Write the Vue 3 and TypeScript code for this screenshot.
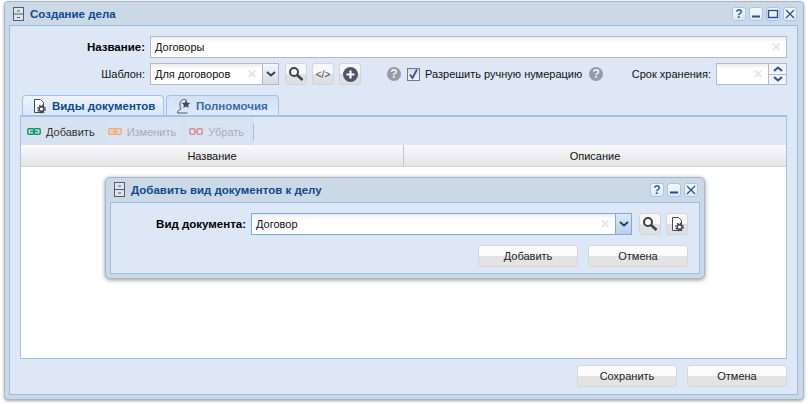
<script setup lang="ts">
const stubs: string[] = []
</script>

<template>
  <div class="page">
    <div class="win">
      <div class="titlebar">
        <svg class="cab" width="14" height="18" viewBox="0 0 14 18"><rect x="2.500" y="2.500" width="10" height="13" fill="#dfe4ea" stroke="#555e6c"/><path d="M2.500 9h10M6 6h3M6 12.500h3" stroke="#555e6c"/></svg>
        <span class="title">Создание дела</span>
        <div class="tools">
          <span class="tool"><b class="q">?</b></span>
          <span class="tool"><svg width="12" height="12" viewBox="0 0 12 12"><path d="M2 8.500h8" stroke="#23508f" stroke-width="2"/></svg></span>
          <span class="tool"><svg width="12" height="12" viewBox="0 0 12 12"><rect x="1.500" y="2.500" width="9" height="7" fill="none" stroke="#23508f" stroke-width="1.400"/></svg></span>
          <span class="tool"><svg width="12" height="12" viewBox="0 0 12 12"><path d="M2 2l8 8M10 2l-8 8" stroke="#23508f" stroke-width="1.200"/></svg></span>
        </div>
      </div>
      <div class="body">
        <div class="row name-row">
          <label class="lbl strong">Название:</label>
          <div class="input grow"><span class="val">Договоры</span><span class="x">✕</span></div>
        </div>
        <div class="row tpl-row">
          <label class="lbl">Шаблон:</label>
          <div class="input combo"><span class="val">Для договоров</span><span class="x">✕</span></div>
          <span class="trigger"><svg width="10" height="6" viewBox="0 0 10 6"><path d="M1 1l4 3.500L9 1" fill="none" stroke="#30445f" stroke-width="2"/></svg></span>
          <button class="ibtn first"><svg width="18" height="18" viewBox="0 0 18 18"><circle cx="7" cy="7" r="4" fill="#fff" stroke="#3a414c" stroke-width="2"/><path d="M10 10l5.500 5" stroke="#3a414c" stroke-width="2.600"/></svg></button>
          <button class="ibtn code">&lt;/&gt;</button>
          <button class="ibtn"><svg width="17" height="17" viewBox="0 0 17 17"><circle cx="8.500" cy="8.500" r="7.500" fill="#4e5567"/><path d="M8.500 4.500v8M4.500 8.500h8" stroke="#fff" stroke-width="2.200"/></svg></button>
          <span class="help h1">?</span>
          <span class="check"><svg width="13" height="13" viewBox="0 0 13 13"><path d="M3 6.500l2.500 3.500L10 1.500" fill="none" stroke="#33569b" stroke-width="1.800"/></svg></span>
          <span class="chk-text">Разрешить ручную нумерацию</span>
          <span class="help h2">?</span>
          <span class="term">Срок хранения:</span>
          <div class="input spin-input"><span class="x">✕</span></div>
          <div class="spin">
            <span><svg width="10" height="6" viewBox="0 0 10 6"><path d="M1 5l4-3.500L9 5" fill="none" stroke="#30508a" stroke-width="2"/></svg></span>
            <span><svg width="10" height="6" viewBox="0 0 10 6"><path d="M1 1l4 3.500L9 1" fill="none" stroke="#30508a" stroke-width="2"/></svg></span>
          </div>
        </div>
        <div class="tabs">
          <div class="tab active">
            <svg width="15" height="16" viewBox="0 0 15 16"><path d="M2.500 1.500h6l3 3v10h-9z" fill="#fff" stroke="#454c59"/><circle cx="9.500" cy="11" r="2.400" fill="none" stroke="#454c59" stroke-width="1.600"/><circle cx="9.500" cy="11" r="3.800" fill="none" stroke="#454c59" stroke-width="1.400" stroke-dasharray="1.500 1.500"/></svg>
            <span>Виды документов</span>
          </div>
          <div class="tab second">
            <svg width="16" height="16" viewBox="0 0 16 16"><path d="M1.500 15c0-3 2-3 3.500-4-1.500-2-1.500-6 0-8 1.500-2 5-2 6 0" fill="none" stroke="#50565f"/><path d="M1.500 15h10" stroke="#50565f"/><path d="M10 2l1.300 2.700 3 .3-2.200 2 .6 3L10 8.500 7.300 10l.6-3-2.200-2 3-.3z" fill="#454c59"/></svg>
            <span>Полномочия</span>
          </div>
        </div>
        <div class="tabbody">
          <div class="toolbar">
            <span class="tb"><svg width="14" height="7" viewBox="0 0 14 7"><rect x="0.800" y="0.800" width="6" height="5.400" rx="1" fill="none" stroke="#0f9a64" stroke-width="1.500"/><rect x="7.200" y="0.800" width="6" height="5.400" rx="1" fill="none" stroke="#0f9a64" stroke-width="1.500"/><path d="M3 3.500h8" stroke="#0f9a64" stroke-width="1.500"/></svg>Добавить</span>
            <span class="tb off edit"><svg width="14" height="7" viewBox="0 0 14 7"><rect x="0.800" y="0.800" width="6" height="5.400" rx="1" fill="none" stroke="#f0ad74" stroke-width="1.500"/><rect x="7.200" y="0.800" width="6" height="5.400" rx="1" fill="none" stroke="#f0ad74" stroke-width="1.500"/><path d="M3 3.500h8" stroke="#f0ad74" stroke-width="1.500"/></svg>Изменить</span>
            <span class="tb off del"><svg width="14" height="7" viewBox="0 0 14 7"><rect x="0.800" y="0.800" width="5" height="5.400" rx="1" fill="none" stroke="#dc8d9a" stroke-width="1.500"/><rect x="8.200" y="0.800" width="5" height="5.400" rx="1" fill="none" stroke="#dc8d9a" stroke-width="1.500"/><path d="M5.800 3.500h2.400" stroke="#dc8d9a" stroke-width="1.500"/></svg>Убрать</span>
            <span class="sep"></span>
          </div>
          <div class="thead">
            <div class="th">Название</div>
            <div class="th">Описание</div>
          </div>
          <div class="grid-body"></div>
        </div>
        <div class="footer">
          <button class="btn">Сохранить</button>
          <button class="btn">Отмена</button>
        </div>
      </div>

      <div class="dialog">
        <div class="titlebar dlg-title">
          <svg class="cab" width="14" height="18" viewBox="0 0 14 18"><rect x="2.500" y="1.500" width="10" height="14" fill="#dfe4ea" stroke="#555e6c"/><path d="M2.500 8.500h10M6 5h3M6 12h3" stroke="#555e6c"/></svg>
          <span class="title">Добавить вид документов к делу</span>
          <div class="tools dlg-tools">
            <span class="tool"><b class="q">?</b></span>
            <span class="tool"><svg width="12" height="12" viewBox="0 0 12 12"><path d="M2 8.500h8" stroke="#23508f" stroke-width="2"/></svg></span>
            <span class="tool"><svg width="12" height="12" viewBox="0 0 12 12"><path d="M2 2l8 8M10 2l-8 8" stroke="#23508f" stroke-width="1.200"/></svg></span>
          </div>
        </div>
        <div class="dlg-body">
          <div class="dlg-row">
            <label class="lbl strong dlg-lbl">Вид документа:</label>
            <div class="input focus"><span class="val">Договор</span><span class="x">✕</span></div>
            <span class="trigger focus-trigger"><svg width="10" height="6" viewBox="0 0 10 6"><path d="M1 1l4 3.500L9 1" fill="none" stroke="#23406f" stroke-width="2"/></svg></span>
            <button class="ibtn first-d"><svg width="18" height="18" viewBox="0 0 18 18"><circle cx="7" cy="7" r="4" fill="#fff" stroke="#3a414c" stroke-width="2"/><path d="M10 10l5.500 5" stroke="#3a414c" stroke-width="2.600"/></svg></button>
            <button class="ibtn"><svg width="15" height="16" viewBox="0 0 15 16"><path d="M2.500 1.500h6l3 3v10h-9z" fill="#fff" stroke="#454c59"/><circle cx="9.500" cy="11" r="2.400" fill="none" stroke="#454c59" stroke-width="1.600"/><circle cx="9.500" cy="11" r="3.800" fill="none" stroke="#454c59" stroke-width="1.400" stroke-dasharray="1.500 1.500"/></svg></button>
          </div>
          <div class="dlg-actions">
            <button class="btn">Добавить</button>
            <button class="btn">Отмена</button>
          </div>
        </div>
      </div>
    </div>
    <i v-for="s in stubs" :key="s"></i>
  </div>
</template>

<style>
html, body { margin: 0; background: #fff; }
</style>

<style scoped>
.page {
  width: 808px;
  height: 404px;
  overflow: hidden;
  padding: 1px 4px 4px 4px;
  box-sizing: border-box;
  font-family: "Liberation Sans", "Noto Sans", sans-serif;
  font-size: 11px;
  color: #111;
}
.win {
  position: relative;
  height: 399px;
  width: 800px;
  box-sizing: border-box;
  border: 1px solid #aab6c8;
  border-radius: 4px;
  background: #cbd8e6;
  box-shadow: 0 1px 3px rgba(80, 90, 110, .55);
  padding: 0 5px 4px 4px;
  display: flex;
  flex-direction: column;
}
.titlebar {
  height: 23px;
  display: flex;
  align-items: center;
  flex: none;
}
.cab { margin-right: 5px; margin-left: 2px; flex: none; }
.title { font-weight: 700; font-size: 11.500px; color: #0f4a90; white-space: nowrap; }
.tools { margin-left: auto; margin-right: 1px; display: flex; gap: 3px; }
.tool {
  width: 14px; height: 14px;
  box-sizing: border-box;
  border: 1px solid #a9c5e8;
  border-radius: 3px;
  background: linear-gradient(#f6faff, #dbe8f8);
  display: flex; align-items: center; justify-content: center;
}
.q { font-size: 12px; line-height: 1; color: #2d62ad; }
.body {
  flex: 1;
  min-height: 0;
  border: 1px solid #99bce8;
  background: #dde7f6;
  display: flex;
  flex-direction: column;
  padding: 10px 10px 7px 10px;
}
.row { display: flex; align-items: center; height: 22px; flex: none; }
.tpl-row { margin-top: 5px; }
.lbl { width: 125px; text-align: right; margin-right: 5px; flex: none; }
.strong { font-weight: 700; font-size: 11.500px; color: #000; }
.input {
  height: 22px;
  box-sizing: border-box;
  border: 1px solid #b5b8c8;
  background: linear-gradient(#ececec 0, #fff 5px);
  display: flex;
  align-items: center;
  padding: 0 5px 0 4px;
}
.grow { flex: 1; }
.val { flex: 1; white-space: nowrap; }
.x { color: #e4e6e9; font-size: 12px; font-weight: 700; margin-left: auto; }
.combo { width: 113px; }
.trigger {
  width: 16px; height: 22px; box-sizing: border-box;
  border: 1px solid #b5b8c8; border-left: 0;
  background: linear-gradient(#f4f6fb, #d5dbe4);
  display: flex; align-items: center; justify-content: center; flex: none;
}
.ibtn {
  width: 22px; height: 22px; padding: 0; margin: 0 0 0 5px; flex: none;
  border: 1px solid #d2d5da; border-radius: 3px;
  background: linear-gradient(#f7f7f7 50%, #dfe0e2 50%);
  display: flex; align-items: center; justify-content: center;
  font: 11px "Liberation Sans", sans-serif; color: #454c59;
}
.first { margin-left: 6px; }
.code { font-size: 10px; }
.help {
  width: 14px; height: 14px; border-radius: 50%;
  background: #979ba6; color: #eef1f6;
  font-weight: 700; font-size: 12px; line-height: 14px; text-align: center; flex: none;
}
.h1 { margin-left: 26px; }
.h2 { margin-left: 7px; }
.check {
  width: 13px; height: 13px; margin-left: 6px; box-sizing: border-box; flex: none;
  border: 1px solid #75788a; background: linear-gradient(#d5d9e2, #f4f5f8);
  display: flex; align-items: center; justify-content: center;
}
.check svg { flex: none; }
.chk-text { margin-left: 5px; white-space: nowrap; }
.term { margin-left: auto; margin-right: 5px; white-space: nowrap; }
.spin-input { width: 53px; }
.spin {
  width: 18px; height: 22px; box-sizing: border-box; border: 1px solid #b5b8c8; border-left: 0; flex: none;
  display: flex; flex-direction: column; background: #f0f3f8;
}
.spin span { flex: 1; display: flex; align-items: center; justify-content: center; }
.spin span + span { border-top: 1px solid #b5b8c8; }
.tabs { display: flex; gap: 2px; margin-top: 10px; padding-left: 2px; height: 20px; flex: none; }
.tab {
  height: 20px; box-sizing: border-box;
  border: 1px solid #a4c2e9; border-bottom: 0;
  border-radius: 4px 4px 0 0;
  display: flex; align-items: center; gap: 4px;
  padding: 0 0 0 9px;
  font-weight: 700; font-size: 11.500px;
  white-space: nowrap;
  color: #3a6ba8;
  background: linear-gradient(#d2e1f5, #dfeafb);
  flex: none;
}
.tab.active { width: 142px; gap: 5px; color: #0f4a90; background: linear-gradient(#eef4fd, #dae8fb 90%); position: relative; }
.tab.second { width: 113px; }
.tabbody {
  flex: 1; min-height: 0;
  border: 1px solid #a4c2e9; border-top: 2px solid #a4c2e9;
  background: #fff;
  display: flex; flex-direction: column;
}
.toolbar {
  height: 28px; flex: none; display: flex; align-items: center; gap: 3px;
  box-sizing: border-box;
  background: linear-gradient(90deg, #d7e2f1 232px, #dde7f6 233px);
  padding: 1px 0 0 6px;
}
.tb { display: inline-flex; align-items: center; gap: 5px; height: 20px; padding-right: 4px; white-space: nowrap; color: #333; }
.tb.off { color: #a9adb5; background: #dae3f1; box-shadow: 0 0 0 2px #dae3f1; }
.edit { margin-left: 6px; }
.del { margin-left: 6px; }
.sep { width: 1px; height: 18px; background: #a4c2e9; margin-left: 2px; }
.thead { height: 22px; flex: none; display: flex; background: linear-gradient(#f9f9f9, #e3e4e6); border-bottom: 1px solid #d3d4d6; box-sizing: border-box; }
.th { flex: 1; text-align: center; line-height: 22px; }
.th + .th { border-left: 1px solid #c5c5c5; }
.grid-body { flex: 1; background: #fff; }
.footer { display: flex; justify-content: flex-end; gap: 10px; margin-top: 6px; flex: none; }
.btn {
  width: 100px; height: 22px; padding: 0; flex: none;
  border: 1px solid #d5d7da; border-radius: 3px;
  background: linear-gradient(#fbfbfb 50%, #e3e3e3 50%);
  font: 11px "Liberation Sans", "Noto Sans", sans-serif; color: #222;
}
.dialog {
  position: absolute;
  left: 100px; top: 175px;
  width: 600px; height: 102px;
  box-sizing: border-box;
  border: 1px solid #aab6c8;
  border-radius: 5px;
  background: #cbd8e6;
  box-shadow: 0 1px 4px rgba(70, 80, 100, .6);
  padding: 0 4px 4px 4px;
  display: flex;
  flex-direction: column;
}
.dlg-title { height: 24px; }
.dlg-tools { margin-right: 2px; }
.dlg-body {
  flex: 1;
  box-sizing: border-box;
  border: 1px solid #99bce8;
  background: #dde7f6;
  padding: 10px 11px 0 10px;
}
.dlg-row { display: flex; align-items: center; height: 22px; }
.dlg-lbl { width: 125px; }
.focus { flex: 1; border-color: #7eadd9; }
.focus-trigger { border-color: #7eadd9; background: linear-gradient(#dbe8f8, #b9d0ec); }
.first-d { margin-left: 7px; }
.dlg-actions { display: flex; justify-content: flex-end; gap: 10px; margin-top: 10px; }
</style>
